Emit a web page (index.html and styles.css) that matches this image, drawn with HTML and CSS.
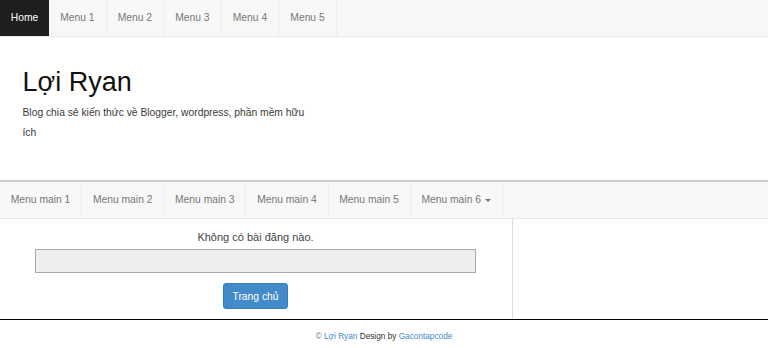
FILE: index.html
```html
<!DOCTYPE html>
<html lang="vi">
<head>
<meta charset="utf-8">
<title>Lợi Ryan</title>
<link rel="stylesheet" href="styles.css">
</head>
<body>
<nav class="topnav">
  <a class="topnav-item active" href="#">Home</a>
  <a class="topnav-item" href="#">Menu 1</a>
  <a class="topnav-item" href="#">Menu 2</a>
  <a class="topnav-item" href="#">Menu 3</a>
  <a class="topnav-item" href="#">Menu 4</a>
  <a class="topnav-item" href="#">Menu 5</a>
</nav>
<header class="header">
  <h1 class="site-title">Lợi Ryan</h1>
  <p class="tagline">Blog chia sẻ kiến thức về Blogger, wordpress, phần mềm hữu ích</p>
</header>
<nav class="mainnav">
  <a class="mainnav-item" href="#">Menu main 1</a>
  <a class="mainnav-item" href="#">Menu main 2</a>
  <a class="mainnav-item" href="#">Menu main 3</a>
  <a class="mainnav-item" href="#">Menu main 4</a>
  <a class="mainnav-item" href="#">Menu main 5</a>
  <a class="mainnav-item" href="#">Menu main 6 <span class="caret"></span></a>
</nav>
<main class="content">
  <section class="main-col">
    <p class="empty-msg">Không có bài đăng nào.</p>
    <div class="empty-box"></div>
    <a class="btn-home" href="#">Trang chủ</a>
  </section>
  <aside class="side-col"></aside>
</main>
<footer class="footer">
  <span class="copy">©</span> <a class="footer-link" href="#">Lợi Ryan</a> <span class="footer-text">Design by</span> <a class="footer-link" href="#">Gacontapcode</a>
</footer>
</body>
</html>
```
FILE: styles.css
```css
* { box-sizing: border-box; }
html, body { margin: 0; padding: 0; }
body {
  font-family: "Liberation Sans", Arial, sans-serif;
  font-size: 10.5px;
  color: #333;
  background: #fff;
  width: 768px;
  height: 348px;
  overflow: hidden;
}
a { text-decoration: none; }

.topnav {
  display: flex;
  height: 37px;
  background: #f8f8f8;
  border-bottom: 1px solid #e7e7e7;
}
.topnav-item {
  padding: 0 11.1px;
  line-height: 36px;
  font-size: 10.3px;
  color: #777;
  border-right: 1px solid #eeeeee;
}
.topnav-item.active {
  background: #1f1f1f;
  color: #fff;
  border-right: none;
  padding: 0 10.8px;
}

.header {
  height: 145px;
  padding: 29.7px 22.5px 0;
  border-bottom: 2px solid #cccccc;
}
.site-title {
  margin: 0;
  font-size: 27px;
  line-height: 30px;
  font-weight: normal;
  color: #111;
}
.tagline {
  margin: 6.7px 0 0;
  width: 288px;
  font-size: 10.3px;
  line-height: 20px;
  color: #3a3a3a;
}

.mainnav {
  display: flex;
  height: 37px;
  background: #f8f8f8;
  border-bottom: 1px solid #e7e7e7;
}
.mainnav-item {
  padding: 0 10.8px;
  line-height: 36px;
  font-size: 10.3px;
  color: #777;
  border-right: 1px solid #eeeeee;
}
.caret {
  display: inline-block;
  width: 0;
  height: 0;
  margin-left: 1.5px;
  vertical-align: middle;
  border-top: 3px solid #777;
  border-left: 3px solid transparent;
  border-right: 3px solid transparent;
}

.content {
  display: grid;
  grid-template-columns: 513px 1fr;
  height: 100px;
}
.main-col {
  border-right: 1px solid #dddddd;
  padding: 10px 36px 0 35px;
  display: flex;
  flex-direction: column;
  align-items: center;
}
.empty-msg {
  margin: 0;
  font-size: 11px;
  line-height: 16px;
  color: #444;
}
.empty-box {
  align-self: stretch;
  margin-top: 4px;
  height: 24px;
  background: #eeeeee;
  border: 1px solid #aaaaaa;
}
.btn-home {
  margin-top: 10px;
  padding: 4.5px 8.5px;
  font-size: 10.3px;
  line-height: 15px;
  color: #fff;
  background: #428bca;
  border: 1px solid #357ebd;
  border-radius: 3px;
}

.footer {
  border-top: 1px solid #000;
  padding-top: 10px;
  text-align: center;
  font-size: 8.25px;
  line-height: 13px;
}
.copy { color: #777; }
.footer-link { color: #428bca; }
.footer-text { color: #333; }
```
